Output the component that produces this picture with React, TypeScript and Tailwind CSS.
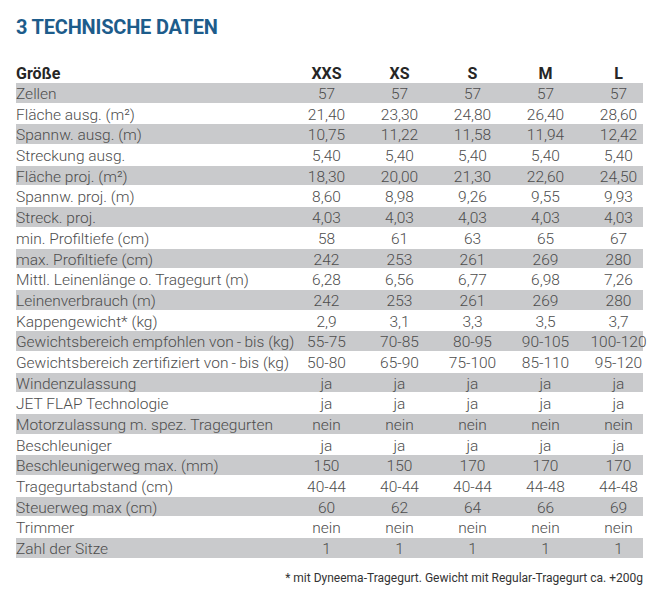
const sizes = ["XXS", "XS", "S", "M", "L"];

const rows: [string, string[]][] = [
  ["Zellen", ["57", "57", "57", "57", "57"]],
  ["Fläche ausg. (m²)", ["21,40", "23,30", "24,80", "26,40", "28,60"]],
  ["Spannw. ausg. (m)", ["10,75", "11,22", "11,58", "11,94", "12,42"]],
  ["Streckung ausg.", ["5,40", "5,40", "5,40", "5,40", "5,40"]],
  ["Fläche proj. (m²)", ["18,30", "20,00", "21,30", "22,60", "24,50"]],
  ["Spannw. proj. (m)", ["8,60", "8,98", "9,26", "9,55", "9,93"]],
  ["Streck. proj.", ["4,03", "4,03", "4,03", "4,03", "4,03"]],
  ["min. Profiltiefe (cm)", ["58", "61", "63", "65", "67"]],
  ["max. Profiltiefe (cm)", ["242", "253", "261", "269", "280"]],
  ["Mittl. Leinenlänge o. Tragegurt (m)", ["6,28", "6,56", "6,77", "6,98", "7,26"]],
  ["Leinenverbrauch (m)", ["242", "253", "261", "269", "280"]],
  ["Kappengewicht* (kg)", ["2,9", "3,1", "3,3", "3,5", "3,7"]],
  ["Gewichtsbereich empfohlen von\u2009-\u2009bis (kg)", ["55-75", "70-85", "80-95", "90-105", "100-120"]],
  ["Gewichtsbereich zertifiziert von\u2009-\u2009bis (kg)", ["50-80", "65-90", "75-100", "85-110", "95-120"]],
  ["Windenzulassung", ["ja", "ja", "ja", "ja", "ja"]],
  ["JET FLAP Technologie", ["ja", "ja", "ja", "ja", "ja"]],
  ["Motorzulassung m. spez. Tragegurten", ["nein", "nein", "nein", "nein", "nein"]],
  ["Beschleuniger", ["ja", "ja", "ja", "ja", "ja"]],
  ["Beschleunigerweg max. (mm)", ["150", "150", "170", "170", "170"]],
  ["Tragegurtabstand (cm)", ["40-44", "40-44", "40-44", "44-48", "44-48"]],
  ["Steuerweg max (cm)", ["60", "62", "64", "66", "69"]],
  ["Trimmer", ["nein", "nein", "nein", "nein", "nein"]],
  ["Zahl der Sitze", ["1", "1", "1", "1", "1"]],
];

export default function App() {
  return (
    <div
      className="w-[662px] h-[600px] bg-white pl-4 pt-[15px]"
      style={{ fontFamily: "Roboto, 'Liberation Sans', sans-serif" }}
    >
      <h1 className="text-[20px] leading-[24px] font-bold text-[#1d5c8b] tracking-[-0.2px]">
        3 TECHNISCHE DATEN
      </h1>

      <div className="mt-[23px] w-[627px]">
        <div className="grid grid-cols-[274px_repeat(5,73px)] h-[21px] items-center text-[16px] font-bold text-[#262626]">
          <div>Größe</div>
          {sizes.map((s) => (
            <div key={s} className="text-center">
              {s}
            </div>
          ))}
        </div>

        {rows.map(([label, vals], i) => (
          <div
            key={label}
            className={`grid grid-cols-[274px_repeat(5,73px)] h-[20.7px] items-center text-[15.5px] font-light text-[#4d4d4d] border-b border-white ${
              i % 2 === 0 ? "bg-[#c9cacc]" : "bg-white"
            }`}
          >
            <div className="whitespace-nowrap">{label}</div>
            {vals.map((v, j) => (
              <div key={j} className="text-center whitespace-nowrap">
                {v}
              </div>
            ))}
          </div>
        ))}

        <div className="mt-[10px] text-right text-[12px] text-[#333]">
          * mit Dyneema-Tragegurt. Gewicht mit Regular-Tragegurt ca. +200g
        </div>
      </div>
    </div>
  );
}
